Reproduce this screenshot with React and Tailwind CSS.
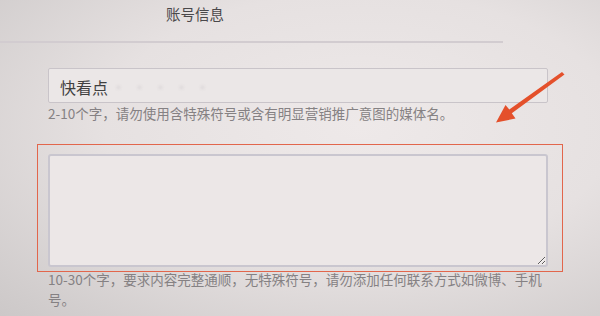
const CJK = { fontFamily: '"Noto Sans CJK SC", "Noto Sans", sans-serif' }

function Arrow() {
  // annotation arrow pointing at the description field
  return (
    <svg className="absolute inset-0 pointer-events-none" width="600" height="316" viewBox="0 0 600 316">
      <polygon
        points="562,72 564.5,74.5 511.8,113.2 515.5,118.5 496,122.5 505.5,105 509.3,109.6"
        fill="#e4502b"
      />
    </svg>
  )
}

export default function App() {
  return (
    <div
      className="relative w-[600px] h-[316px] overflow-hidden bg-[radial-gradient(ellipse_at_60%_40%,#eee9e9_0%,#e6e1e1_50%,#ccc8c8_100%)]"
      style={CJK}
    >
      {/* header */}
      <div className="w-[503px] h-[43px] border-b-2 border-[#d2ccd0] pl-[166px] pt-[1px]">
        <span className="text-[14.5px] leading-[20px] text-[#4a484a]">账号信息</span>
      </div>

      <div className="w-[548px] pl-[48px]">
        {/* media name */}
        <div className="mt-[25px] h-[35px] border border-[#c9c4c9] rounded-[2px] bg-[#ebe7e7] flex items-center pl-[11px] pt-[3px]">
          <span className="text-[16px] text-[#404040]">快看点</span>
          <span className="ml-[4px] text-[13px] text-[#d2cdd0] blur-[1.5px] tracking-[8px]">·····</span>
        </div>
        <p className="text-[13.5px] leading-[20px] text-[#858183] whitespace-nowrap">
          2-10个字，请勿使用含特殊符号或含有明显营销推广意图的媒体名。
        </p>

        {/* description */}
        <div className="relative mt-[31px]">
          <textarea
            className="block w-full h-[113px] border-2 border-[#c9c6cf] rounded-[3px] bg-[#ece7e7] outline-none"
          />
          <div className="absolute -left-[11px] -top-[10px] -right-[15px] -bottom-[5px] border-[1.5px] border-[#e2664c] pointer-events-none" />
        </div>
        <p className="mt-[2px] text-[13.5px] leading-[20px] text-[#858183] whitespace-nowrap">
          10-30个字，要求内容完整通顺，无特殊符号，请勿添加任何联系方式如微博、手机
          <br />
          号。
        </p>
      </div>

      <Arrow />
    </div>
  )
}
